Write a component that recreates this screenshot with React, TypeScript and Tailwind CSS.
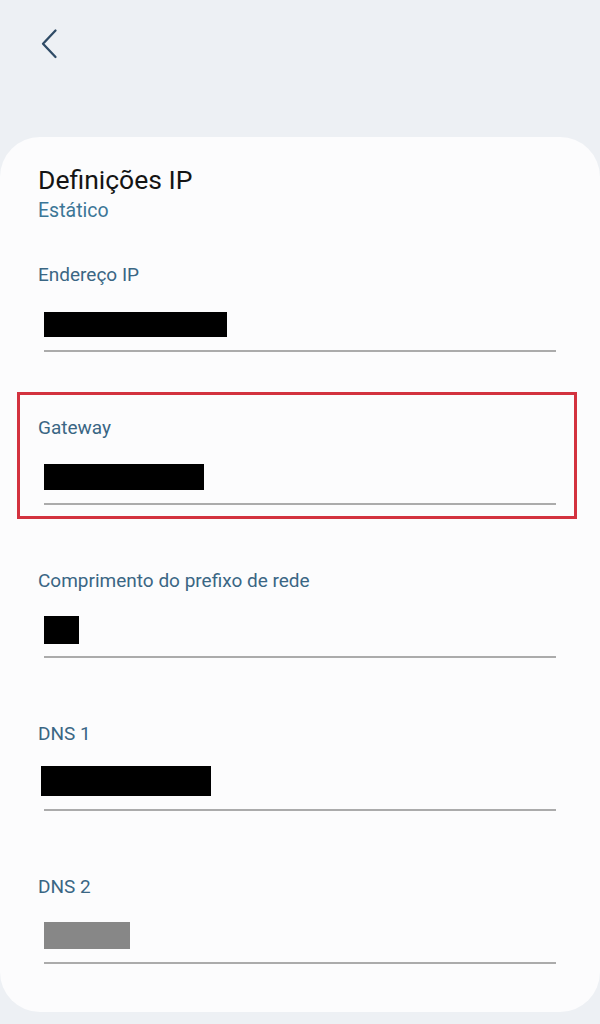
import type { ReactNode } from "react";

type Field = {
  label: string;
  value: ReactNode;
  highlighted?: boolean;
};

// Masked values: the addresses are blanked out with solid bars.
const fields: Field[] = [
  {
    label: "Endereço IP",
    value: <div className="mt-[25px] h-[25px] w-[183px] bg-black" />,
  },
  {
    label: "Gateway",
    value: <div className="-ml-[0.5px] mt-[24px] h-[26px] w-[160px] bg-black" />,
    highlighted: true,
  },
  {
    label: "Comprimento do prefixo de rede",
    value: <div className="-ml-[0.5px] mt-[23px] h-[28px] w-[35px] bg-black" />,
  },
  {
    label: "DNS 1",
    value: <div className="-ml-[3px] mt-[20px] h-[30px] w-[170px] bg-black" />,
  },
  {
    label: "DNS 2",
    value: <div className="-ml-[0.5px] mt-[23px] h-[27px] w-[86px] bg-[#878787]" />,
  },
];

function BackButton() {
  return (
    <button type="button" aria-label="Voltar" className="ml-[38px] mt-[26px] h-[36px] w-[24px]">
      <svg width="24" height="36" viewBox="0 0 24 36" fill="none">
        <path
          d="M17.5 4.5 L5 17.75 L17.5 31"
          stroke="#2f4b66"
          strokeWidth="2.3"
          strokeLinecap="round"
          strokeLinejoin="round"
        />
      </svg>
    </button>
  );
}

function IpField({ label, value, highlighted }: Field) {
  return (
    <div className="relative">
      {highlighted && (
        <div className="pointer-events-none absolute -top-[24px] -right-[21px] -bottom-[14px] -left-[21px] border-[3px] border-[#d3323f]" />
      )}
      <p className="h-[24px] text-[19px] leading-[24px] text-[#3a6684]">{label}</p>
      <div className="ml-[6px]">
        <div className="flex h-[63px] items-start">{value}</div>
        <div className="h-[2px] bg-[#ababab]" />
      </div>
    </div>
  );
}

export default function App() {
  return (
    <div
      className="flex min-h-[1024px] flex-col bg-[#edf0f4] pb-[12px]"
      style={{ fontFamily: "Roboto, 'Noto Sans', sans-serif" }}
    >
      <header className="h-[137px]">
        <BackButton />
      </header>

      <main className="rounded-[40px] bg-[#fcfcfd] pt-[28px] pr-[44px] pb-[48px] pl-[38px]">
        <h1 className="text-[26.5px] leading-[30px] font-normal text-[#141414]">Definições IP</h1>
        <p className="mt-[4px] text-[19.5px] leading-[24px] text-[#3b7697]">Estático</p>

        <div className="mt-[40px] flex flex-col gap-[64px]">
          {fields.map((field) => (
            <IpField key={field.label} {...field} />
          ))}
        </div>
      </main>
    </div>
  );
}
